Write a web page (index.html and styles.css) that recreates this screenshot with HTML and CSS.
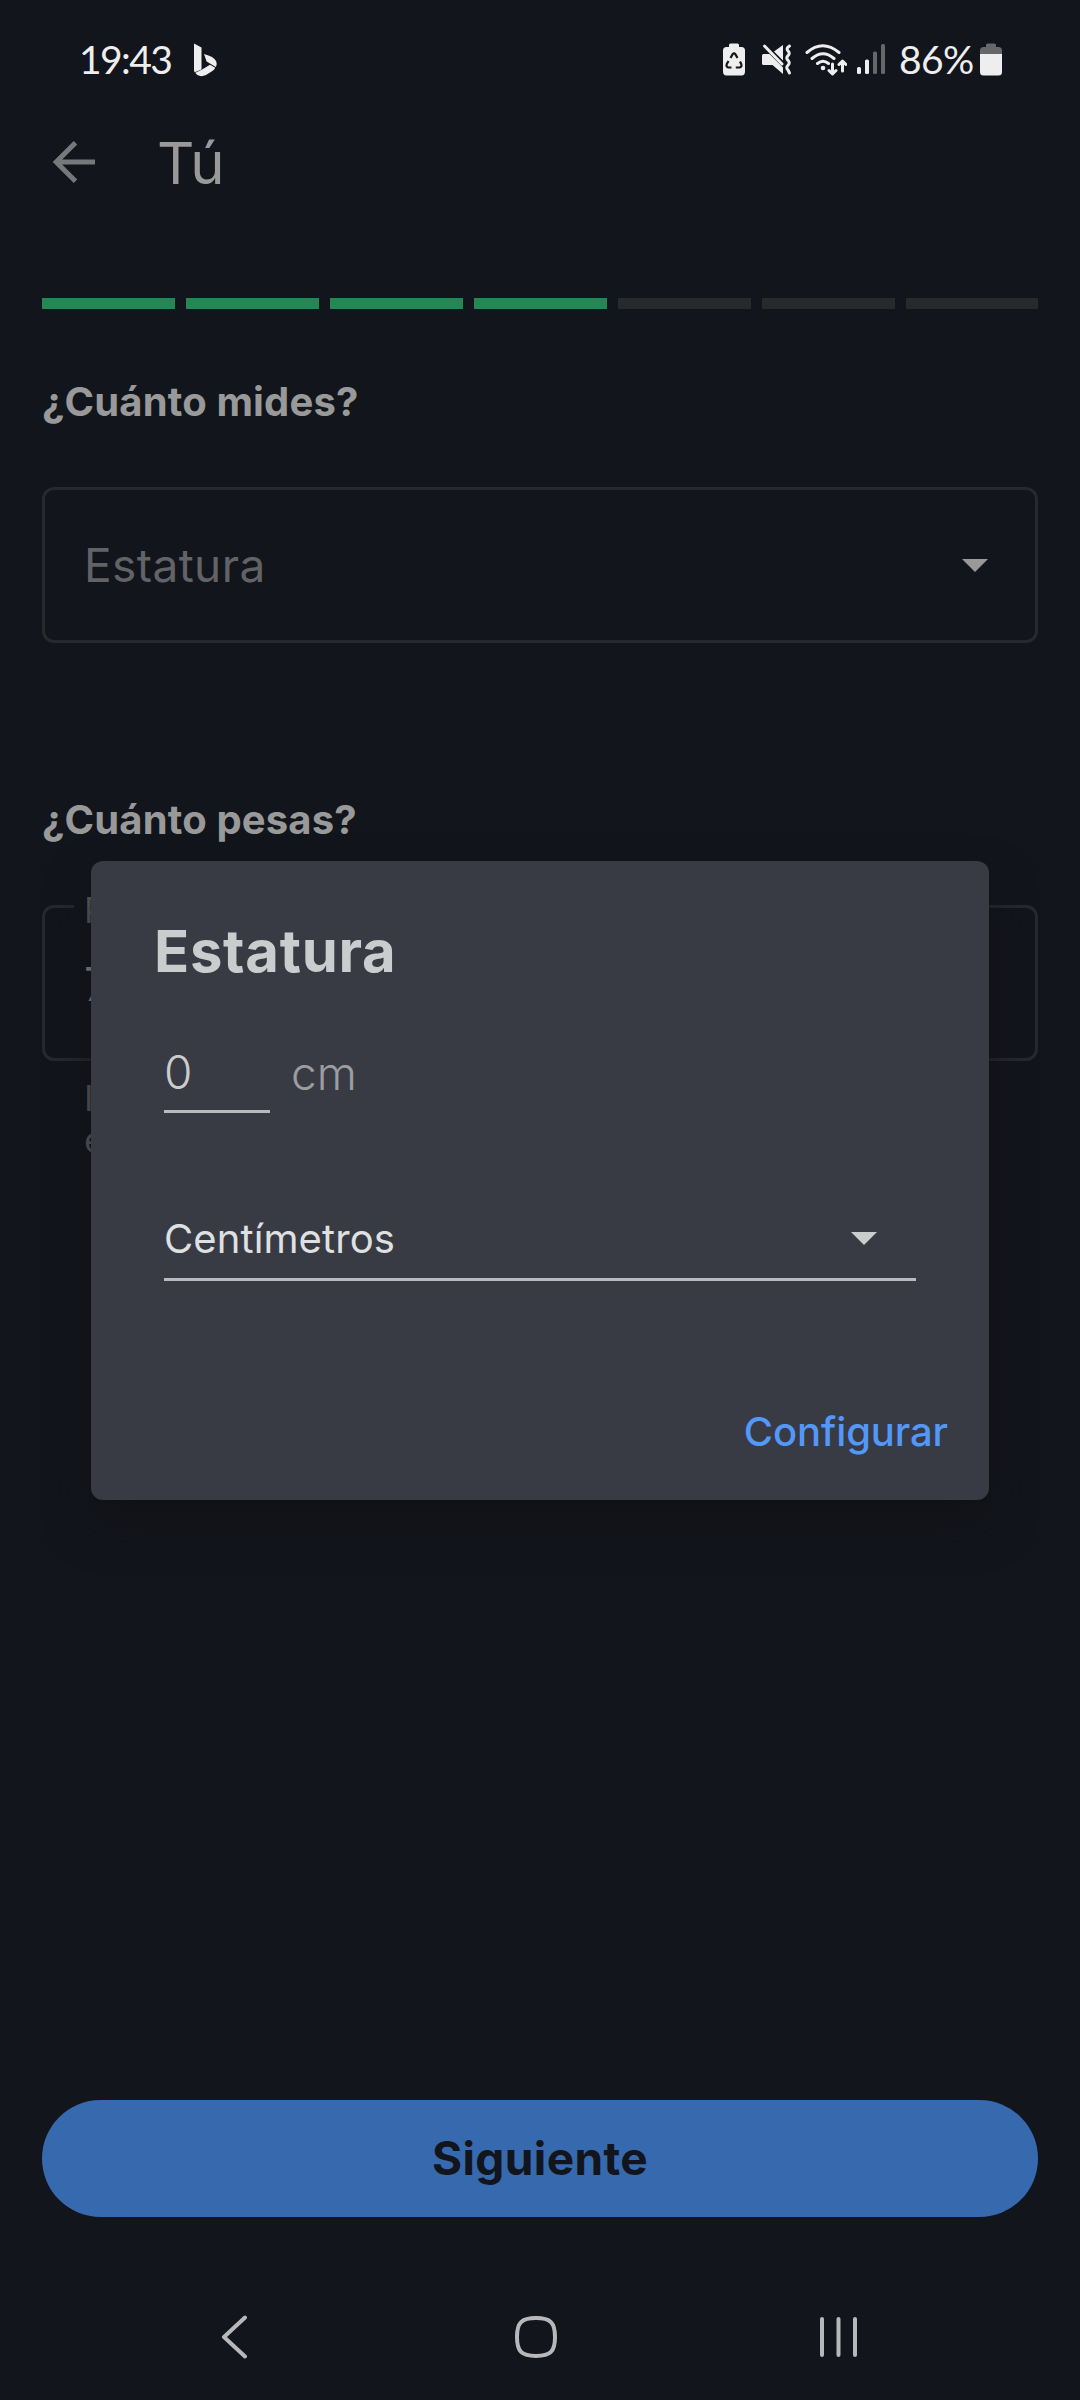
FILE: index.html
```html
<!DOCTYPE html>
<html lang="es">
<head>
<meta charset="utf-8">
<title>Tú</title>
<link rel="stylesheet" href="styles.css">
</head>
<body>
<div class="screen">
  <header class="status">
    <span class="status-time">19:43</span>
    <svg class="bing" width="24" height="34" viewBox="0 0 24 34"><path d="M1 .5l7.500 4v22L1.700 29.300Q1 28.500 1 27z"/><path d="M11 11q10 2.500 12 7 1.500 3.500-.3 6l-5.700-3.400-3.400-2z"/><path d="M2.300 29.800l6.400-3 8.300-5 5.200 3q-.8 2-3.200 3.500l-6 3.800q-5 2.300-8.500 0-1.400-1-2.200-2.300z"/></svg>
    <div class="status-icons">
      <svg width="22" height="33" viewBox="0 0 22 33"><path d="M6 4V2q0-1.500 1.500-1.500h7Q16 .5 16 2v2h2.500Q22 4 22 7.500v21q0 4-3.500 4h-15Q0 32.500 0 28.500v-21Q0 4 3.500 4z"/><g class="cut"><path d="M7.500 15l2-3.600q1.500-2 3 0l2 3.600M17 18.500l1.300 2.700q.8 2.600-1.500 3.300h-4M8.500 24.500H5.200q-2.300-.7-1.500-3.300L5.500 18"/></g></svg>
      <svg width="30" height="33" viewBox="0 0 30 33"><path d="M1.500 11h6L21 24.500V31L10.500 22H1.500Q0 22 0 20.500v-8Q0 11 1.500 11zM21 2v15.500L12 8.500z"/><path class="line" d="M2.500 3L20 21M27.500 3q-4 2.500-1.500 4.800t0 4.800 0 4.800 0 4.800 0 4.800l1.500 3"/></svg>
      <svg class="wifi" width="42" height="33" viewBox="0 0 42 33"><path class="line" d="M2 9.500q15.500-13.500 32 0M7 15.500q11-9.500 22 0M12.500 20.500q5.500-4.500 11 0"/><circle cx="18" cy="25" r="2.300"/><path class="line" d="M27.500 21v9M24 27.500l3.500 3.500 3.500-3.500M37.500 28V18.500M34 21.500l3.500-3.500 3.500 3.500"/></svg>
      <svg class="signal" width="28" height="31" viewBox="0 0 28 31"><rect y="23" width="4" height="7" rx="1.500"/><rect x="8" y="15.500" width="4" height="14.500" rx="1.500"/><rect class="dim" x="16" y="7.500" width="4" height="22.500" rx="1.500"/><rect class="dim" x="24" y="0" width="4" height="30" rx="1.500"/></svg>
      <span class="status-battery">86%</span>
      <svg class="battery" width="22" height="33" viewBox="0 0 22 33"><path class="dim" d="M0 11V7.500Q0 4 3.500 4H6V2Q6 .5 7.500 .5h7Q16 .5 16 2v2h2.500Q22 4 22 7.500V11z"/><path d="M0 11h22v18q0 3.500-3.500 3.500h-15Q0 32.500 0 29z"/></svg>
    </div>
  </header>
  <nav class="topbar">
    <svg width="44" height="42" viewBox="0 0 44 42"><path d="M43 21H4M23.500 1.800L4.200 21l19.300 19.200"/></svg>
    <h1>Tú</h1>
  </nav>
  <main>
    <div class="progress"><i class="done"></i><i class="done"></i><i class="done"></i><i class="done"></i><i></i><i></i><i></i></div>
    <h2>¿Cuánto mides?</h2>
    <div class="field">
      <span class="placeholder">Estatura</span>
      <svg width="26" height="13" viewBox="0 0 26 13"><path d="M0 0h26L13 13z"/></svg>
    </div>
    <h2 class="second">¿Cuánto pesas?</h2>
    <div class="field">
      <span class="legend">P</span>
      <span class="value">7</span>
    </div>
    <p class="help">I<br>e</p>
  </main>
  <button class="next">Siguiente</button>
  <footer class="nav">
    <svg width="44" height="44" viewBox="0 0 44 44"><path d="M33 2.500L12 22l21 19.500"/></svg>
    <svg width="44" height="44" viewBox="0 0 44 44"><path d="M22 3C36.500 3 41 7.500 41 22S36.500 41 22 41 3 36.500 3 22 7.500 3 22 3z"/></svg>
    <svg width="44" height="44" viewBox="0 0 44 44"><path d="M6 4v36M22.500 4v36M39 4v36"/></svg>
  </footer>
  <section class="dialog">
    <h3>Estatura</h3>
    <div class="amount"><span class="number">0</span><span class="unit">cm</span></div>
    <div class="select"><span>Centímetros</span><svg width="26" height="13" viewBox="0 0 26 13"><path d="M0 0h26L13 13z"/></svg></div>
    <a class="action">Configurar</a>
  </section>
</div>
</body>
</html>
```
FILE: styles.css
```css
* { box-sizing: border-box; }
body { margin: 0; background: #12151c; font-family: Inter, sans-serif; color: #999; }
h1, h2, h3, p { margin: 0; }
svg { display: block; flex: none; }
.screen { position: relative; width: 1080px; height: 2400px; display: flex; flex-direction: column; overflow: hidden; }

.status { height: 120px; padding: 0 78px 2px 79px; display: flex; align-items: center; color: #eee; fill: #eee; font-family: Lato, sans-serif; font-size: 39px; }
.status-time { width: 114px; letter-spacing: -1.6px; white-space: nowrap; }
.bing { margin-top: 1px; }
.status-icons { margin-left: auto; display: flex; align-items: center; }
.status-icons svg + svg { margin-left: 17px; }
.status-icons svg + .wifi { margin-left: 13px; }
.status-icons svg + .signal { margin-left: 10px; }
.status-battery { width: 77px; margin-left: 14px; letter-spacing: -0.6px; white-space: nowrap; }
.battery { margin-left: 4px; }
.dim { fill: #66676b; }
.line { fill: none; stroke: #eee; stroke-width: 3; stroke-linecap: round; stroke-linejoin: round; }
.cut { fill: none; stroke: #12151c; stroke-width: 2.2; }

.topbar { height: 120px; padding: 0 52px; display: flex; align-items: flex-start; gap: 61px; }
.topbar svg { margin-top: 21px; fill: none; stroke: #77787a; stroke-width: 5; }
.topbar h1 { font-size: 58px; line-height: 70px; font-weight: 400; margin-top: 8px; }

main { padding: 58px 42px 0; }
.progress { display: grid; grid-template-columns: repeat(6, 133px) 132px; gap: 11px; height: 11px; }
.progress i { background: #28292d; }
.progress .done { background: #258756; }
h2 { font-size: 40px; line-height: 50px; font-weight: 700; margin-top: 68px; letter-spacing: 0.15px; }
.field { position: relative; height: 156px; margin-top: 60px; padding: 0 47px 0 39px; border: 3px solid #28292d; border-radius: 12px; display: flex; align-items: center; justify-content: space-between; fill: #999; }
.placeholder { font-size: 46px; color: #626366; letter-spacing: 0.4px; }
.second { margin-top: 152px; }
.legend { position: absolute; left: 29px; top: -20px; padding: 0 10px; background: #12151c; font-size: 36px; line-height: 44px; color: #626366; }
.value { font-size: 46px; padding-top: 1px; }
.help { margin: 16px 0 0 42px; font-size: 36px; line-height: 42px; color: #626366; }

.next { margin: auto 42px 0; height: 117px; padding: 0 0 2px; border: 0; border-radius: 59px; background: #3669ae; color: #12151c; font: 700 46px Inter, sans-serif; letter-spacing: 0.4px; }
.nav { height: 183px; padding: 98px 220px 0 212px; display: flex; justify-content: space-between; fill: none; stroke: #b8b8ba; stroke-width: 4; stroke-linecap: round; stroke-linejoin: round; }

.dialog { position: absolute; left: 91px; top: 861px; width: 898px; height: 639px; border-radius: 12px; background: #393b44; box-shadow: 0 24px 44px rgba(17, 17, 19, .8); display: flex; flex-direction: column; padding: 55px 41px 0 63px; color: #cbccce; }
.dialog h3 { font-size: 58px; line-height: 70px; font-weight: 700; letter-spacing: 0.7px; }
.amount { display: flex; align-items: flex-start; margin: 59px 0 0 10px; height: 68px; font-size: 46px; line-height: 54px; font-weight: 350; }
.number { width: 106px; height: 68px; border-bottom: 3px solid #b9babd; }
.unit { margin-left: 21px; color: #9c9da1; line-height: 56px; }
.select { margin: 85px 32px 0 10px; height: 83px; width: 752px; border-bottom: 3px solid #b9babd; display: flex; align-items: center; justify-content: space-between; padding: 0 39px 0 0; font-size: 40px; letter-spacing: 0.1px; color: #dfe0e1; fill: #cbccce; }
.action { align-self: flex-end; margin-top: 126px; font-size: 40px; line-height: 50px; font-weight: 500; letter-spacing: -0.1px; color: #5398f8; }
```
